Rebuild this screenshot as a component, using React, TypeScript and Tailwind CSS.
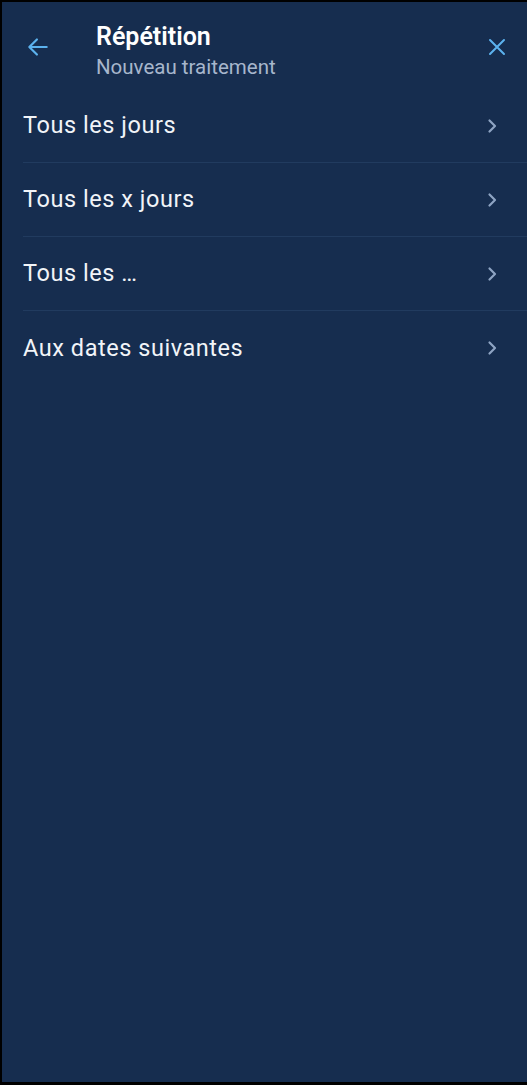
import React from "react";

const items = ["Tous les jours", "Tous les x jours", "Tous les …", "Aux dates suivantes"];

const Chevron = () => (
  <svg width="14" height="16" viewBox="0 0 14 16" fill="none" stroke="#8ea4c3" strokeWidth="2.2" strokeLinecap="round" strokeLinejoin="round">
    <path d="M4.5 2.5 L10 8 L4.5 13.5" />
  </svg>
);

export default function App() {
  return (
    <div className="w-[527px] h-[1085px] bg-black pt-[2px] pl-[2px] pb-[3px]" style={{ fontFamily: "Roboto, 'Noto Sans', sans-serif" }}>
      <div className="h-full bg-[#162d4f] flex flex-col">
        <header className="flex items-start h-[87px] pt-[20px]">
          <button className="w-[72px] h-[52px] flex items-center pl-[23px] -mt-[1px]">
            <svg width="26" height="26" viewBox="0 0 24 24" fill="none" stroke="#5cb2ee" strokeWidth="2" strokeLinecap="round" strokeLinejoin="round">
              <path d="M20 12H5" />
              <path d="M11 5l-7 7 7 7" />
            </svg>
          </button>
          <div className="flex-1 flex flex-col ml-[22px]">
            <span className="text-[25px] leading-[30px] font-semibold text-white">Répétition</span>
            <span className="text-[20.5px] leading-[26px] text-[#a7b6cc] mt-[2px]">Nouveau traitement</span>
          </div>
          <button className="w-[60px] h-[52px] flex items-center justify-center -mt-[1px]">
            <svg width="24" height="24" viewBox="0 0 24 24" fill="none" stroke="#5cb2ee" strokeWidth="2" strokeLinecap="round">
              <path d="M5 5l14 14M19 5L5 19" />
            </svg>
          </button>
        </header>
        <ul className="flex flex-col">
          {items.map((label, key) => (
            <li key={key} className="pl-[21px]">
              <div className={`flex items-center justify-between h-[74px] pr-[28px] ${key < items.length - 1 ? "border-b border-[#213b5f]" : ""}`}>
                <span className="text-[23.5px] leading-[30px] pb-[1px] text-[#f1f4f8] tracking-[0.55px]">{label}</span>
                <Chevron />
              </div>
            </li>
          ))}
        </ul>
      </div>
    </div>
  );
}
